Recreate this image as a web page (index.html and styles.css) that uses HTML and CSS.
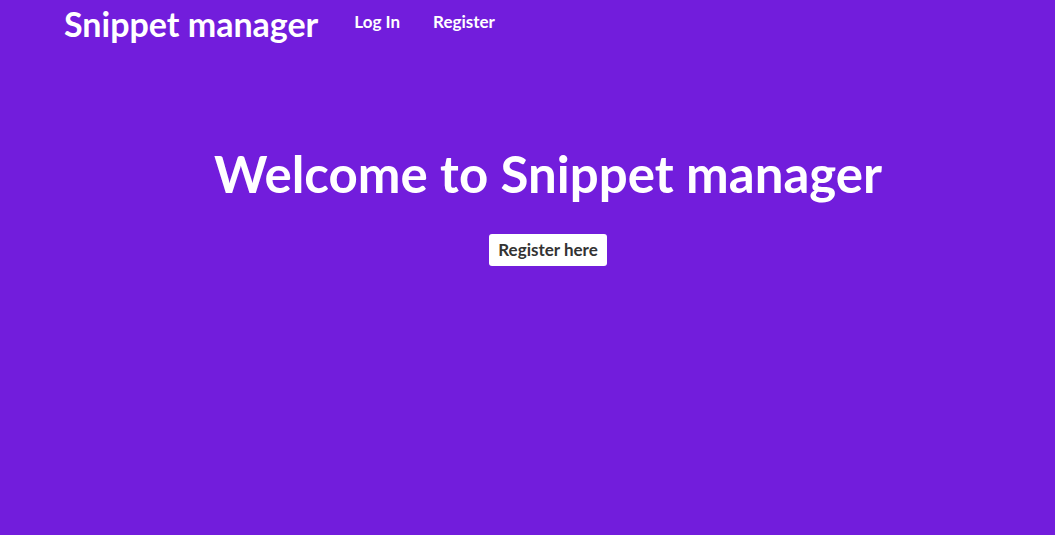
FILE: index.html
```html
<!DOCTYPE html>
<html>
<head>
<meta charset="utf-8">
<link rel="stylesheet" href="styles.css">
</head>
<body>
<header class="nav">
  <a class="brand" href="#">Snippet manager</a>
  <a class="nav-link" href="#">Log In</a>
  <a class="nav-link" href="#">Register</a>
</header>
<main class="hero">
  <h1 class="hero-title">Welcome to Snippet manager</h1>
  <a class="hero-btn" href="#">Register here</a>
</main>
</body>
</html>
```
FILE: styles.css
```css
html, body {
  margin: 0;
  padding: 0;
  height: 100%;
}
body {
  background: #721ddc;
  font-family: Lato, "Noto Sans", sans-serif;
  color: #fff;
}
.nav {
  display: flex;
  align-items: center;
  padding: 3px 0 0 64px;
  height: 40px;
}
.brand {
  color: #fff;
  text-decoration: none;
  font-weight: 700;
  font-size: 34px;
  margin-right: 36px;
}
.nav-link {
  color: #fff;
  text-decoration: none;
  font-weight: 700;
  font-size: 17px;
  margin-right: 33px;
  margin-top: -4px;
}
.hero {
  display: flex;
  flex-direction: column;
  align-items: center;
  padding-left: 41px;
  padding-top: 100px;
}
.hero-title {
  margin: 0;
  font-size: 51px;
  font-weight: 700;
  line-height: 1.2;
}
.hero-btn {
  margin-top: 30px;
  background: #fff;
  color: #333;
  text-decoration: none;
  font-weight: 700;
  font-size: 17px;
  padding: 5px 9px 6px;
  border-radius: 3px;
}
```
